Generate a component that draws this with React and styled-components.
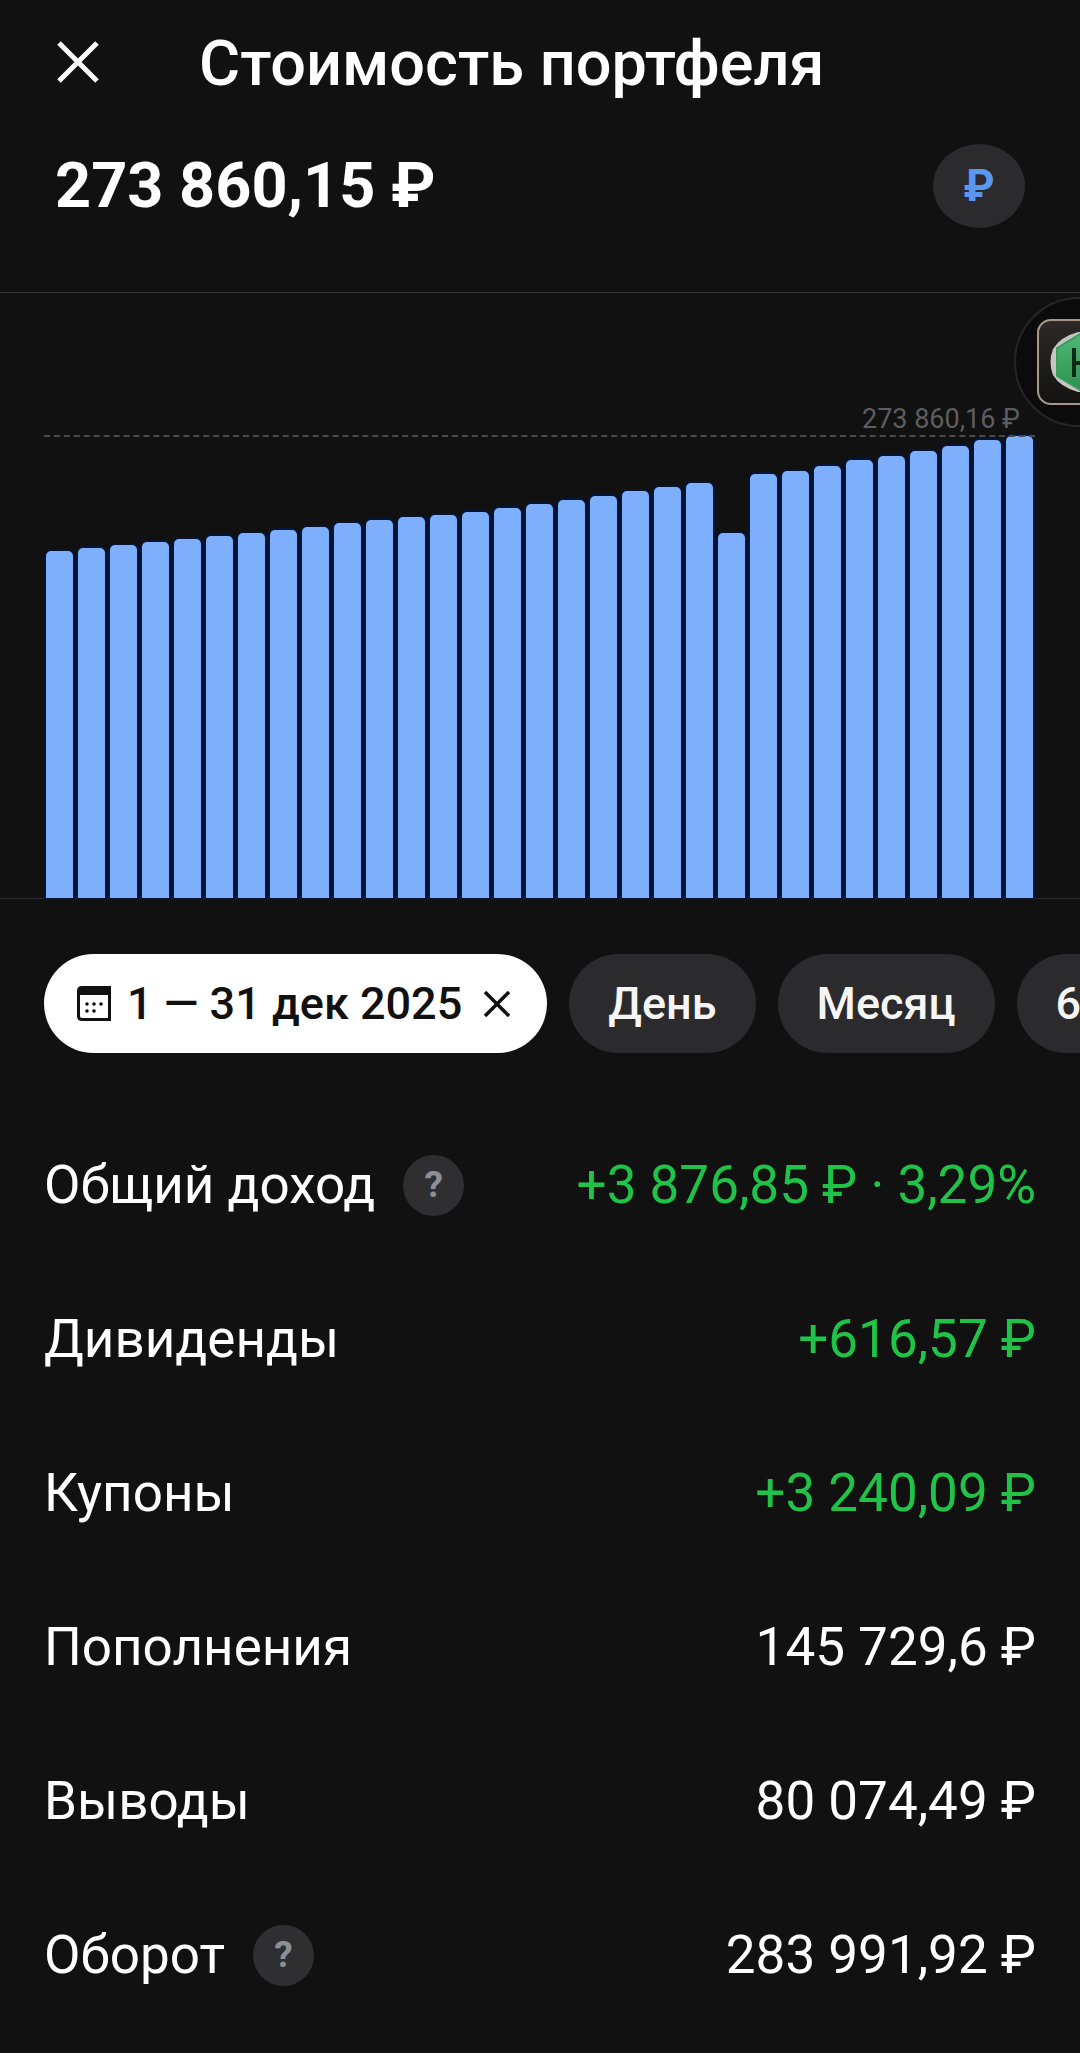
import React from "react";
import styled, { createGlobalStyle } from "styled-components";

const Global = createGlobalStyle`
  html, body { margin: 0; padding: 0; background: #111112; }
  * { box-sizing: border-box; }
  body { font-family: Roboto, "Liberation Sans", sans-serif; }
`;

const Page = styled.div`
  width: 1080px;
  height: 2053px;
  overflow: hidden;
  background: #111112;
  color: #fff;
`;

const TopBar = styled.header`
  height: 124px;
  display: flex;
  align-items: center;
  padding-left: 57px;
  gap: 100px;
`;

const CloseButton = styled.div`
  width: 42px;
  height: 42px;
  display: flex;
`;

const Title = styled.h1`
  margin: 3px 0 0;
  font-size: 63px;
  line-height: 74px;
  font-weight: 500;
  letter-spacing: 0;
`;

const Summary = styled.section`
  height: 169px;
  display: flex;
  align-items: flex-start;
  justify-content: space-between;
  padding: 20px 55px 0 55px;
  border-bottom: 1px solid #333335;
`;

const Total = styled.div`
  font-size: 63px;
  line-height: 84px;
  font-weight: 700;
`;

const CurrencyButton = styled.div`
  width: 92px;
  height: 84px;
  border-radius: 50%;
  background: #2b2b2d;
  color: #5b97f0;
  font-size: 44px;
  font-weight: 700;
  display: flex;
  align-items: center;
  justify-content: center;
`;

const Chart = styled.section`
  position: relative;
  height: 606px;
  border-bottom: 1px solid #2c2c2e;
  display: flex;
  align-items: flex-end;
  gap: 5px;
  padding-left: 46px;
`;

const Bar = styled.div`
  width: 27px;
  flex: none;
  background: #7eaffc;
  border-radius: 5px 5px 0 0;
  box-shadow: 0 0 0 2px #061534;
`;

const MaxLine = styled.div`
  position: absolute;
  left: 44px;
  width: 991px;
  top: 142px;
  border-top: 2px dashed #4a4a4c;
`;

const MaxLabel = styled.div`
  position: absolute;
  right: 60px;
  top: 110px;
  font-size: 27px;
  line-height: 32px;
  color: #5d5d5f;
`;

const Coin = styled.div`
  position: absolute;
  left: 1014px;
  top: 4px;
  width: 130px;
  height: 130px;
  border-radius: 50%;
  background: #0b0b0c;
  border: 2px solid #262628;
  display: flex;
  align-items: center;
  padding-left: 21px;
`;

const CoinTile = styled.div`
  width: 86px;
  height: 86px;
  flex: none;
  border-radius: 14px;
  border: 2px solid #a8978a;
  background: linear-gradient(180deg, #2c2927 0%, #141312 100%);
  display: flex;
  align-items: center;
  padding-left: 11px;
`;

const CoinMark = styled.svg`
  flex: none;
`;

const Filters = styled.nav`
  display: flex;
  gap: 22px;
  padding: 55px 0 0 44px;
  height: 209px;
  overflow: hidden;
`;

const Pill = styled.div`
  flex: none;
  height: 99px;
  border-radius: 50px;
  display: flex;
  align-items: center;
  font-size: 45px;
  font-weight: 500;
  padding: 0 ${(p) => p.$pad}px;
  padding-right: ${(p) => (p.$active ? 37 : p.$pad)}px;
  background: ${(p) => (p.$active ? "#fff" : "#2b2b2d")};
  color: ${(p) => (p.$active ? "#111" : "#f5f5f5")};
`;

const DateText = styled.span`
  font-weight: 500;
  white-space: nowrap;
  margin: 0 22px 0 15px;
`;

const Rows = styled.section`
  padding: 0 44px;
`;

const Row = styled.div`
  height: 154px;
  display: flex;
  align-items: center;
  justify-content: space-between;
`;

const Label = styled.div`
  display: flex;
  align-items: center;
  gap: 28px;
  font-size: 53px;
  line-height: 60px;
  font-weight: 400;
`;

const Hint = styled.span`
  width: 61px;
  height: 61px;
  border-radius: 50%;
  background: #2f2f32;
  color: #8d8f96;
  font-size: 37px;
  font-weight: 700;
  display: flex;
  align-items: center;
  justify-content: center;
`;

const Value = styled.div`
  font-size: 53px;
  line-height: 60px;
  font-weight: 400;
  color: ${(p) => (p.$positive ? "#20c348" : "#fff")};
`;

const tops = [551, 548, 545, 542, 539, 536, 533, 530, 527, 523, 520, 517, 515, 512, 508, 504, 500, 496, 491, 487, 483, 533, 474, 471, 466, 460, 456, 451, 446, 440, 436];
const rows = [
  { label: "Общий доход", hint: true, value: "+3 876,85 ₽ · 3,29%", positive: true },
  { label: "Дивиденды", value: "+616,57 ₽", positive: true },
  { label: "Купоны", value: "+3 240,09 ₽", positive: true },
  { label: "Пополнения", value: "145 729,6 ₽" },
  { label: "Выводы", value: "80 074,49 ₽" },
  { label: "Оборот", hint: true, value: "283 991,92 ₽" },
];

export default function App() {
  return (
    <Page>
      <Global />
      <TopBar>
        <CloseButton>
          <svg width="42" height="42" viewBox="0 0 42 42" fill="none" stroke="#fff" strokeWidth="5">
            <path d="M2 2 L40 40 M40 2 L2 40" />
          </svg>
        </CloseButton>
        <Title>Стоимость портфеля</Title>
      </TopBar>
      <Summary>
        <Total>273 860,15 ₽</Total>
        <CurrencyButton>₽</CurrencyButton>
      </Summary>
      <Chart>
        {tops.map((t, i) => (
          <Bar key={i} style={{ height: 898 - t }} />
        ))}
        <MaxLine />
        <MaxLabel>273 860,16 ₽</MaxLabel>
        <Coin>
          <CoinTile>
            <CoinMark width="64" height="62" viewBox="0 0 64 62">
              <defs>
                <linearGradient id="coinGreen" x1="0" y1="0" x2="0" y2="1">
                  <stop offset="0" stopColor="#4fb873" />
                  <stop offset="1" stopColor="#2f9152" />
                </linearGradient>
              </defs>
              <path d="M28 1 Q10 6 3 18 Q-2 31 3 44 Q10 56 28 61 H64 V1 Z" fill="#c4c6c4" />
              <path d="M30 3 L7 17 V45 L30 59 L64 59 V3 Z" fill="url(#coinGreen)" stroke="#3b9c5c" strokeWidth="2" strokeLinejoin="round" />
              <path d="M24 17 V46 M26 32 H31" stroke="#0c2a16" strokeWidth="4" fill="none" />
            </CoinMark>
          </CoinTile>
        </Coin>
      </Chart>
      <Filters>
        <Pill $active $pad={32}>
          <svg width="36" height="37" viewBox="0 0 36 37">
            <path d="M6 1 H35 V36 H6 Q1 36 1 31 V6 Q1 1 6 1 Z" fill="#111" />
            <path d="M4 10 H32 V33 H6 Q4 33 4 31 Z" fill="#fff" />
            <g fill="#111">
              <circle cx="11" cy="19" r="1.8" /><circle cx="18" cy="19" r="1.8" /><circle cx="25" cy="19" r="1.8" />
              <circle cx="11" cy="26" r="1.8" /><circle cx="18" cy="26" r="1.8" />
            </g>
          </svg>
          <DateText>1 — 31 дек 2025</DateText>
          <svg width="26" height="26" viewBox="0 0 26 26" stroke="#111" strokeWidth="3.5" fill="none">
            <path d="M1 1 L25 25 M25 1 L1 25" />
          </svg>
        </Pill>
        <Pill $pad={39}>День</Pill>
        <Pill $pad={39}>Месяц</Pill>
        <Pill $pad={39}>6 месяцев</Pill>
      </Filters>
      <Rows>
        {rows.map((r) => (
          <Row key={r.label}>
            <Label>
              {r.label}
              {r.hint && <Hint>?</Hint>}
            </Label>
            <Value $positive={r.positive}>{r.value}</Value>
          </Row>
        ))}
      </Rows>
    </Page>
  );
}
